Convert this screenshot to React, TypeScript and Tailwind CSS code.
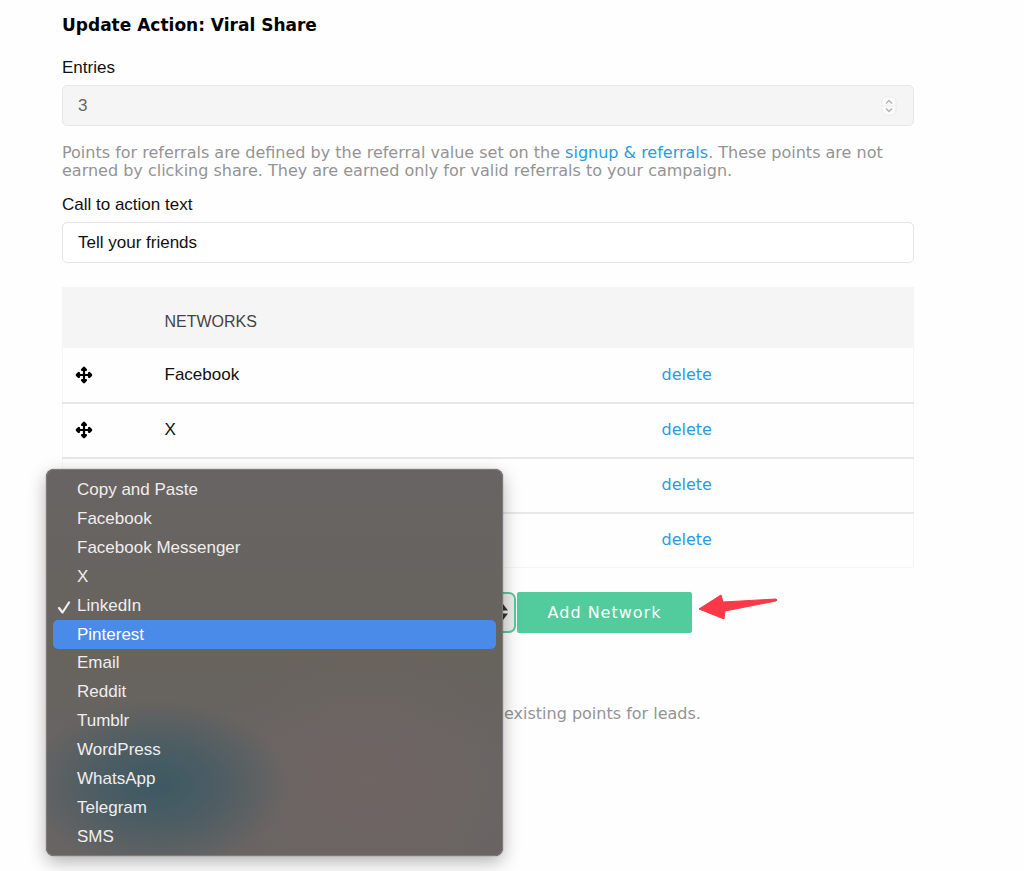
import React, { useState } from 'react'

const OPTIONS = [
  'Copy and Paste',
  'Facebook',
  'Facebook Messenger',
  'X',
  'LinkedIn',
  'Pinterest',
  'Email',
  'Reddit',
  'Tumblr',
  'WordPress',
  'WhatsApp',
  'Telegram',
  'SMS',
]

// the last two rows sit under the open menu
const ROWS = ['Facebook', 'X', '', '']

function MoveIcon() {
  return (
    <svg viewBox="0 0 18 18" className="h-[18px] w-[18px]" fill="black" stroke="black" aria-hidden="true">
      <path d="M9 3v12M3 9h12" strokeWidth="2.2" />
      <path
        d="M9 2l1.800 1.800h-3.600zM9 16l1.800-1.800h-3.600zM2 9l1.800-1.800v3.600zM16 9l-1.800-1.800v3.600z"
        strokeWidth="2.600"
        strokeLinejoin="round"
      />
    </svg>
  )
}

function CheckIcon() {
  return (
    <svg viewBox="0 0 14 14" className="mt-0.5 h-3.5 w-3.5" fill="none" stroke="currentColor" aria-hidden="true">
      <path d="M2 8l3.500 4.500L12 2.500" strokeWidth="2.2" strokeLinecap="round" strokeLinejoin="round" />
    </svg>
  )
}

function Stepper() {
  return (
    <svg viewBox="0 0 16 20" className="h-5 w-4" fill="none" aria-hidden="true">
      <rect x="1" y="1" width="14" height="18" rx="5" fill="#fbfbfb" stroke="#ececec" />
      <path d="M1 10h14" stroke="#ececec" />
      <path d="M5 7.500l3-3 3 3M5 12.500l3 3 3-3" stroke="#b5b5b5" strokeWidth="1.5" />
    </svg>
  )
}

function NetworkTable() {
  return (
    <table className="mt-6 w-full table-fixed border-collapse border border-[#f5f5f5]">
      <thead>
        <tr className="h-[60px] bg-[#f5f5f5] text-left text-base text-[#444]">
          <td className="w-[102px]" />
          <th scope="col" className="pt-2 font-normal">NETWORKS</th>
          <td className="w-[252px]" />
        </tr>
      </thead>
      <tbody>
        {ROWS.map((name, i) => (
          <tr key={i} className="h-[55px] border-b-2 border-[#e8e8e8] last:border-b last:border-[#f5f5f5]">
            <td className="pl-3">
              <MoveIcon />
            </td>
            <td>{name}</td>
            <td className="font-['DejaVu_Sans',sans-serif] text-base">
              <a href="#delete" className="text-[#2c9bdc]">delete</a>
            </td>
          </tr>
        ))}
      </tbody>
    </table>
  )
}

function NetworkMenu({ selected, onSelect }: { selected: string; onSelect: (name: string) => void }) {
  const [active, setActive] = useState('Pinterest')

  return (
    <ul
      role="listbox"
      aria-label="Network"
      className="absolute -top-[123px] -left-4 z-10 grid h-[387px] w-[457px] auto-rows-fr rounded-lg border border-[#7d7a79] bg-[#686463] bg-[radial-gradient(ellipse_130px_85px_at_110px_315px,#3c5963_0%,#3c596399_50%,transparent_100%),radial-gradient(ellipse_170px_150px_at_320px_310px,#6f6563_0%,transparent_100%),linear-gradient(180deg,transparent_0%,#67635d_50%,transparent_75%)] px-1.5 pt-1.5 pb-1 text-[#f0eded] shadow-[0_6px_18px_rgba(0,0,0,0.3),0_0_1px_rgba(0,0,0,0.8)]"
    >
      {OPTIONS.map((name) => (
        <li
          key={name}
          role="option"
          aria-selected={name === selected}
          onMouseEnter={() => setActive(name)}
          onClick={() => onSelect(name)}
          className={`flex items-center rounded-[5px] ${name === active ? 'bg-[#4a8ae9] text-white' : ''}`}
        >
          <span className="flex w-6 pl-1">{name === selected && <CheckIcon />}</span>
          {name}
        </li>
      ))}
    </ul>
  )
}

function Arrow() {
  return (
    <svg viewBox="0 0 80 28" className="mb-3 ml-1.5 h-7 w-20" fill="#fb3748" aria-hidden="true">
      <path
        d="M1 16L23 2L25 9L78 6Q80 7 78 8L27 18L26 26Z"
        stroke="#fb3748"
        strokeWidth="1"
        strokeLinejoin="round"
      />
    </svg>
  )
}

export default function App() {
  const [network, setNetwork] = useState('LinkedIn')
  const [cta, setCta] = useState('Tell your friends')

  return (
    <main className="min-h-screen bg-[#fefefe] pt-4 pr-[110px] pb-[148px] pl-[62px] font-['Liberation_Sans',Arial,sans-serif] text-[17px] leading-[18px] text-[#111]">
      <h1 className="font-['DejaVu_Sans',sans-serif] font-bold text-black">Update Action: Viral Share</h1>

      <label htmlFor="entries" className="mt-[25px] block">Entries</label>
      <div className="mt-2 flex h-[41px] items-center rounded-[5px] border border-[#e6e6e6] bg-[#f5f5f5] pr-4 pl-[15px]">
        <input
          id="entries"
          type="number"
          value={3}
          readOnly
          className="min-w-0 flex-1 [appearance:textfield] bg-transparent text-[#666] outline-none"
        />
        <Stepper />
      </div>

      <p className="mt-[18px] font-['DejaVu_Sans',sans-serif] text-base leading-[18px] text-[#949494]">
        Points for referrals are defined by the referral value set on the{' '}
        <a href="#referrals" className="text-[#2c9bdc]">signup &amp; referrals</a>. These points are not earned by
        clicking share. They are earned only for valid referrals to your campaign.
      </p>

      <label htmlFor="cta" className="mt-4 block">Call to action text</label>
      <input
        id="cta"
        type="text"
        value={cta}
        onChange={(e) => setCta(e.target.value)}
        className="mt-2 block h-[41px] w-full rounded-[5px] border border-[#e6e6e6] bg-white px-[15px] outline-none"
      />

      <NetworkTable />

      <div className="relative mt-6 flex h-[41px] items-center">
        <div className="relative flex w-[454px]">
          <select
            aria-label="Network"
            value={network}
            onChange={(e) => setNetwork(e.target.value)}
            className="h-[41px] w-full appearance-none rounded-[7px] border-2 border-[#52cc9c] bg-[#ececec] px-3 outline-none"
          >
            {OPTIONS.map((name) => (
              <option key={name}>{name}</option>
            ))}
          </select>
          <svg viewBox="0 0 10 16" className="pointer-events-none absolute top-3 right-2 h-4 w-2.5" fill="#333" aria-hidden="true">
            <path d="M5 0l5 6.500H0zM5 16l5-6.500H0z" />
          </svg>
        </div>
        <button
          type="button"
          className="ml-px h-[41px] w-[175px] rounded-xs bg-[#52cc9c] font-['DejaVu_Sans',sans-serif] text-base tracking-[1px] text-white"
        >
          Add Network
        </button>
        <Arrow />
        <NetworkMenu selected={network} onSelect={setNetwork} />
      </div>

      <p className="mt-[72px] pl-[442px] font-['DejaVu_Sans',sans-serif] text-base leading-[18px] text-[#949494]">
        existing points for leads.
      </p>
    </main>
  )
}
